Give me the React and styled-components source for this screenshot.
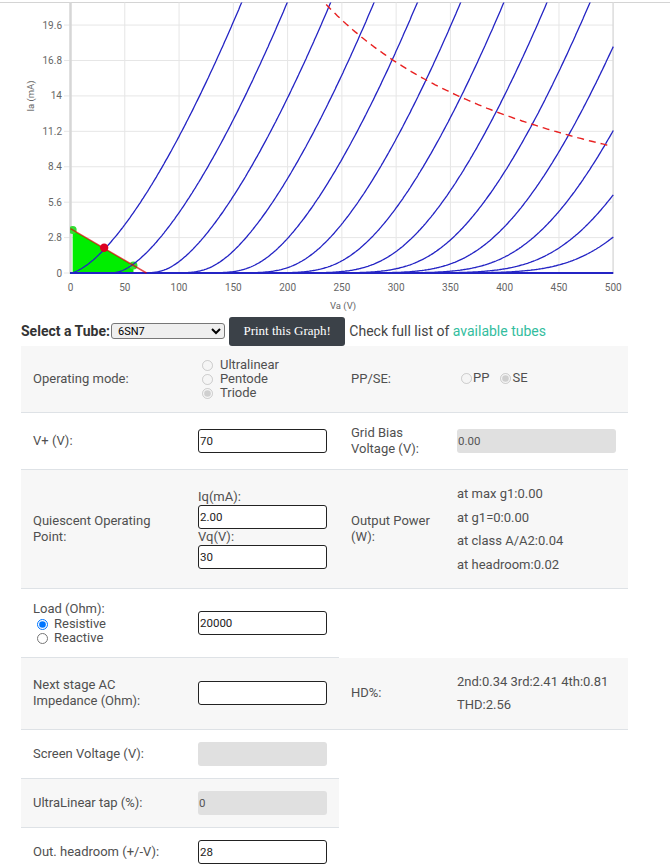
import React from 'react'
import styled, { createGlobalStyle } from 'styled-components'

const GlobalStyle = createGlobalStyle`
  body {
    margin: 0;
    background: #fff;
    font-family: Roboto, "Liberation Sans", sans-serif;
  }
`

const Page = styled.div`
  width: 670px;
`

const ChartSvg = styled.svg`
  display: block;
`

const ToolRow = styled.div`
  display: flex;
  align-items: center;
  height: 30px;
  padding-left: 21px;
`

const ToolLabel = styled.span`
  font-size: 14px;
  font-weight: bold;
  color: #333;
`

const TubeSelect = styled.select`
  width: 114px;
  height: 16px;
  margin: 0 4px 0 1px;
  font-size: 11px;
  font-family: Roboto, sans-serif;
  border: 1px solid #777;
  border-radius: 3px;
  background: #efefef;
  padding: 0 0 0 2px;
`

const PrintButton = styled.button`
  height: 29px;
  padding: 0 14.5px;
  border: none;
  border-radius: 3px;
  background: #3b4148;
  color: #fff;
  font-family: "Liberation Serif", serif;
  font-size: 13px;
  margin-right: 4px;
`

const Note = styled.span`
  font-size: 14px;
  color: #444;
`

const TubeLink = styled.a`
  color: #33bd9e;
  text-decoration: none;
`

const Table = styled.table`
  margin-left: 21px;
  border-collapse: collapse;
  table-layout: fixed;
  font-size: 13px;
  line-height: 16px;
  color: #505050;
`

const Cell = styled.td`
  padding: 12px;
  vertical-align: middle;
  background: ${p => (p.$shade ? '#f7f7f7' : '#fff')};
  border-bottom: 1px solid #dee2e6;
`

const Field = styled.input`
  display: block;
  box-sizing: border-box;
  width: 100%;
  height: 24px;
  padding: 0 1px;
  font-family: Roboto, sans-serif;
  font-size: 11.5px;
  color: #222;
  border: ${p => (p.disabled ? 'none' : '1px solid #222')};
  border-radius: 3px;
  background: ${p => (p.disabled ? '#e0e0e0' : '#fff')};
  outline: none;
  &:disabled { color: #555; }
`

const RadioLine = styled.label`
  display: flex;
  align-items: center;
  height: 14px;
`

const InlineRadio = styled.label`
  display: inline-flex;
  align-items: center;
  margin-right: 7px;
`

const Radio = styled.input.attrs({ type: 'radio' })`
  width: 11px;
  height: 11px;
  margin: 0 ${p => p.$gap ?? 6}px 0 4px;
`

const ValueLine = styled.div`
  line-height: 23.5px;
`

const SubLabel = styled.div`
  line-height: 16px;
`

const X = v => 70.5 + v * 1.0855
const Y = i => 273 - i * 12.65

// soft-knee triode model, grid steps of 40 V equivalent
const plateCurrent = (va, off) => {
  const s = 0.09 * va
  if (s <= 0) return 0
  const z = (va - off) / s
  const x = z > 30 ? va - off : s * Math.log1p(Math.exp(z))
  return 0.0108 * Math.pow(x, 1.5)
}

const curvePath = n => {
  const pts = []
  const off = n === 0 ? 0 : 40 * n + 2
  for (let va = 0; va <= 500; va += 1) {
    const i = plateCurrent(va, off)
    pts.push(`${X(va).toFixed(1)},${Y(i).toFixed(1)}`)
    if (i > 22.5) break
  }
  return 'M' + pts.join('L')
}

const dissPath = () => {
  const pts = []
  for (let va = 228; va <= 498; va += 2) pts.push(`${X(va).toFixed(1)},${Y(5000 / va).toFixed(1)}`)
  return 'M' + pts.join('L')
}

const xTicks = [0, 50, 100, 150, 200, 250, 300, 350, 400, 450, 500]
const yTicks = ['0', '2.8', '5.6', '8.4', '11.2', '14', '16.8', '19.6']

const Chart = () => {
  const load = i => 3.5 * (1 - i / 70)
  return (
    <ChartSvg width="670" height="316" viewBox="0 0 670 316">
      <defs>
        <clipPath id="plot">
          <rect x="70" y="2.5" width="544" height="272" />
        </clipPath>
      </defs>
      <line x1="0" y1="2.5" x2="670" y2="2.5" stroke="#d4d4d4" />
      {xTicks.map(v => (
        <line key={v} x1={X(v)} y1="2.5" x2={X(v)} y2="273" stroke="#e6e6e6" />
      ))}
      {yTicks.map((t, k) => (
        <line key={t} x1="64" y1={Y(k * 2.8)} x2="613" y2={Y(k * 2.8)} stroke="#e6e6e6" />
      ))}
      <line x1="70.5" y1="2.5" x2="70.5" y2="274" stroke="#d6d6d6" strokeWidth="2.5" />
      <line x1="613" y1="2.5" x2="613" y2="274" stroke="#d6d6d6" />
      <g fontFamily="Roboto, sans-serif" fontSize="10" fill="#666">
        {yTicks.map((t, k) => (
          <text key={t} x="62" y={Y(k * 2.8) + 3.5} textAnchor="end">{t}</text>
        ))}
        {xTicks.map(v => (
          <text key={v} x={X(v)} y="291" textAnchor="middle">{v}</text>
        ))}
        <text x="343" y="309" textAnchor="middle" fontSize="9.5">Va (V)</text>
        <text transform="translate(34 96) rotate(-90)" textAnchor="middle" fontSize="9.5">Ia (mA)</text>
      </g>
      <g clipPath="url(#plot)">
        <polygon
          points={`${X(2)},${Y(0)} ${X(2)},${Y(load(2))} ${X(58)},${Y(load(58))} ${X(58)},${Y(0)}`}
          fill="#00ee00"
        />
        <circle cx={X(2)} cy={Y(load(2))} r="4" fill="#33dd33" />
        <circle cx={X(58)} cy={Y(load(58))} r="4" fill="#33dd33" />
        {Array.from({ length: 13 }, (_, n) => (
          <path key={n} d={curvePath(n)} fill="none" stroke="#2424c4" strokeWidth="1.3" />
        ))}
        <line x1={X(0)} y1={Y(0)} x2={X(500)} y2={Y(0)} stroke="#2424c4" strokeWidth="2" />
        <line x1={X(0)} y1={Y(3.5)} x2={X(70)} y2={Y(0)} stroke="#dd0000" strokeOpacity="0.7" strokeWidth="1.5" />
        <path d={dissPath()} fill="none" stroke="#e82020" strokeWidth="1.4" strokeDasharray="7 5" />
        <circle cx={X(31)} cy={Y(2)} r="4.2" fill="#dd0022" />
      </g>
    </ChartSvg>
  )
}

export default function App() {
  return (
    <Page>
      <GlobalStyle />
      <Chart />
      <ToolRow>
        <ToolLabel>Select a Tube:</ToolLabel>
        <TubeSelect defaultValue="6SN7">
          <option>6SN7</option>
        </TubeSelect>
        <PrintButton>Print this Graph!</PrintButton>
        <Note>
          Check full list of <TubeLink href="#">available tubes</TubeLink>
        </Note>
      </ToolRow>
      <Table>
        <colgroup>
          <col style={{ width: 165 }} />
          <col style={{ width: 153 }} />
          <col style={{ width: 106 }} />
          <col style={{ width: 183 }} />
        </colgroup>
        <tbody>
          <tr>
            <Cell $shade>Operating mode:</Cell>
            <Cell $shade>
              <RadioLine><Radio name="mode" disabled $gap={7} />Ultralinear</RadioLine>
              <RadioLine><Radio name="mode" disabled $gap={7} />Pentode</RadioLine>
              <RadioLine><Radio name="mode" disabled defaultChecked $gap={7} />Triode</RadioLine>
            </Cell>
            <Cell $shade>PP/SE:</Cell>
            <Cell $shade>
              <InlineRadio><Radio name="ppse" disabled $gap={1} />PP</InlineRadio>
              <InlineRadio><Radio name="ppse" disabled defaultChecked $gap={1} />SE</InlineRadio>
            </Cell>
          </tr>
          <tr>
            <Cell>V+ (V):</Cell>
            <Cell><Field defaultValue="70" /></Cell>
            <Cell>Grid Bias Voltage (V):</Cell>
            <Cell><Field disabled defaultValue="0.00" /></Cell>
          </tr>
          <tr>
            <Cell $shade>Quiescent Operating Point:</Cell>
            <Cell $shade>
              <SubLabel>Iq(mA):</SubLabel>
              <Field defaultValue="2.00" />
              <SubLabel>Vq(V):</SubLabel>
              <Field defaultValue="30" />
            </Cell>
            <Cell $shade>Output Power (W):</Cell>
            <Cell $shade>
              <ValueLine>at max g1:0.00</ValueLine>
              <ValueLine>at g1=0:0.00</ValueLine>
              <ValueLine>at class A/A2:0.04</ValueLine>
              <ValueLine>at headroom:0.02</ValueLine>
            </Cell>
          </tr>
          <tr>
            <Cell>
              <SubLabel>Load (Ohm):</SubLabel>
              <RadioLine><Radio name="load" defaultChecked $gap={6} />Resistive</RadioLine>
              <RadioLine><Radio name="load" $gap={6} />Reactive</RadioLine>
            </Cell>
            <Cell><Field defaultValue="20000" /></Cell>
          </tr>
          <tr>
            <Cell $shade>Next stage AC Impedance (Ohm):</Cell>
            <Cell $shade><Field defaultValue="" /></Cell>
            <Cell $shade>HD%:</Cell>
            <Cell $shade>
              <ValueLine>2nd:0.34 3rd:2.41 4th:0.81</ValueLine>
              <ValueLine>THD:2.56</ValueLine>
            </Cell>
          </tr>
          <tr>
            <Cell>Screen Voltage (V):</Cell>
            <Cell><Field disabled defaultValue="" /></Cell>
          </tr>
          <tr>
            <Cell $shade>UltraLinear tap (%):</Cell>
            <Cell $shade><Field disabled defaultValue="0" /></Cell>
          </tr>
          <tr>
            <Cell>Out. headroom (+/-V):</Cell>
            <Cell><Field defaultValue="28" /></Cell>
          </tr>
        </tbody>
      </Table>
    </Page>
  )
}
